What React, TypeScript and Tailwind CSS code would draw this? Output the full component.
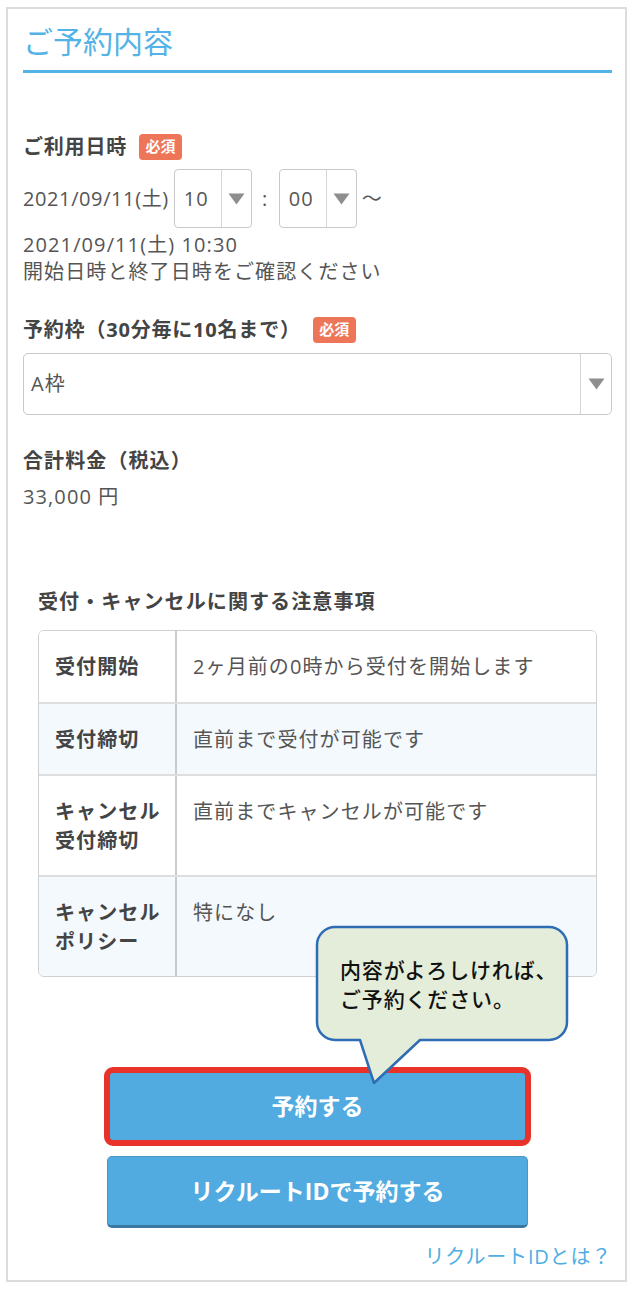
import React from "react";

function Tri() {
  return (
    <svg width="17" height="12" viewBox="0 0 17 12">
      <path d="M0.5 0.5 H16.5 L8.5 11.5 Z" fill="#8e8e8e" />
    </svg>
  );
}

function SmallSelect({ value }: { value: string }) {
  return (
    <div className="flex h-[59px] w-[78px] rounded-[4px] border border-[#c9c9c9] bg-white">
      <div className="flex w-[46px] items-center pl-[9px]">{value}</div>
      <div className="flex flex-1 items-center justify-center border-l border-[#d6d6d6]">
        <Tri />
      </div>
    </div>
  );
}

function Badge() {
  return (
    <span className="flex h-[26px] w-[43px] items-center justify-center rounded-[4px] bg-[#ee7658] text-[15px] font-bold leading-none tracking-normal text-white">
      必須
    </span>
  );
}

const rows = [
  { h: "h-[73px]", label: ["受付開始"], value: "2ヶ月前の0時から受付を開始します", bg: "bg-white" },
  { h: "h-[72px]", label: ["受付締切"], value: "直前まで受付が可能です", bg: "bg-[#f4f9fd]" },
  { h: "h-[101px]", label: ["キャンセル", "受付締切"], value: "直前までキャンセルが可能です", bg: "bg-white" },
  { h: "h-[99px]", label: ["キャンセル", "ポリシー"], value: "特になし", bg: "bg-[#f4f9fd]" },
];

export default function App() {
  return (
    <div className="min-h-[1290px] bg-white pl-[6px] pt-[7px] font-['Open_Sans','Noto_Sans_CJK_JP',sans-serif] text-[20px] tracking-[0.055em] text-[#555555]">
      <div className="relative w-[621px] border-2 border-[#dcdcdc] pb-[9px] pl-[15px] pr-[13px]">
        <h1 className="border-b-[3px] border-[#54b3e6] pb-[8px] pt-[13px] text-[30px] font-normal leading-[40px] tracking-normal text-[#54b3e6]">
          ご予約内容
        </h1>

        <div className="mt-[60px] flex h-[27px] items-center gap-[12px]">
          <span className="font-bold tracking-[0.04em] text-[#444444]">ご利用日時</span>
          <Badge />
        </div>

        <div className="mt-[9px] flex h-[59px] items-center">
          <span className="tracking-[0.03em]">2021/09/11(土)</span>
          <div className="ml-[5px]">
            <SmallSelect value="10" />
          </div>
          <span className="w-[27px] text-center">:</span>
          <SmallSelect value="00" />
          <span className="ml-[5px]">〜</span>
        </div>

        <div className="mt-[3px] leading-[27px]">
          <div>2021/09/11(土) 10:30</div>
          <div>開始日時と終了日時をご確認ください</div>
        </div>

        <div className="mt-[31px] flex h-[27px] items-center gap-[12px]">
          <span className="font-bold tracking-[0.04em] text-[#444444]">予約枠（30分毎に10名まで）</span>
          <Badge />
        </div>

        <div className="mt-[10px] flex h-[62px] rounded-[5px] border border-[#c9c9c9] bg-white">
          <div className="flex flex-1 items-center pl-[7px]">A枠</div>
          <div className="flex w-[31px] items-center justify-center border-l border-[#d6d6d6]">
            <Tri />
          </div>
        </div>

        <div className="mt-[32px] font-bold leading-[27px] text-[#444444]">合計料金（税込）</div>
        <div className="mt-[9px] leading-[27px]">33,000 円</div>

        <div className="px-[15px]">
          <div className="mt-[78px] font-bold leading-[27px] text-[#444444]">
            受付・キャンセルに関する注意事項
          </div>
          <div className="mt-[15px] overflow-hidden rounded-[6px] border border-[#d0d0d0]">
            {rows.map((r, i) => (
              <div
                key={i}
                className={`flex ${r.h} ${r.bg} ${i < rows.length - 1 ? "border-b-2 border-[#dedede]" : ""}`}
              >
                <div className="w-[138px] shrink-0 border-r-2 border-[#cbcbcb] pl-[16px] pt-[21px] font-bold leading-[29px] text-[#444444]">
                  {r.label.map((l) => (
                    <div key={l}>{l}</div>
                  ))}
                </div>
                <div className="flex-1 pl-[16px] pt-[21px] leading-[29px]">{r.value}</div>
              </div>
            ))}
          </div>
        </div>

        <button className="mx-auto mt-[90px] flex h-[79px] w-[427px] items-center justify-center rounded-[9px] border-[6px] border-[#e8322a] bg-[#52abe0] text-[23px] font-bold tracking-normal text-white">
          予約する
        </button>
        <button className="mx-auto mt-[10px] flex h-[72px] w-[421px] items-center justify-center rounded-[5px] border border-b-[3px] border-[#4a97c6] border-b-[#3a78a0] bg-[#52abe0] text-[23px] font-bold tracking-normal text-white">
          リクルートIDで予約する
        </button>

        <div className="mt-[15px] text-right leading-[28px] tracking-[0.04em] text-[#4eaee3]">
          リクルートIDとは？
        </div>

        <div className="absolute left-[307px] top-[916px] h-[162px] w-[254px]">
          <svg width="254" height="162" viewBox="0 0 254 162" className="absolute left-0 top-0">
            <path
              d="M20 2 H234 A18 18 0 0 1 252 20 V97 A18 18 0 0 1 234 115 H105 L59 158 L45 115 H20 A18 18 0 0 1 2 97 V20 A18 18 0 0 1 20 2 Z"
              fill="#e3edd9"
              stroke="#2e6db5"
              strokeWidth="2.5"
              strokeLinejoin="round"
            />
          </svg>
          <div className="absolute left-[25px] top-[30px] font-['Noto_Sans_CJK_JP',sans-serif] text-[21px] font-medium leading-[29px] tracking-[0.04em] text-[#111111]">
            <div>内容がよろしければ、</div>
            <div>ご予約ください。</div>
          </div>
        </div>
      </div>
    </div>
  );
}
